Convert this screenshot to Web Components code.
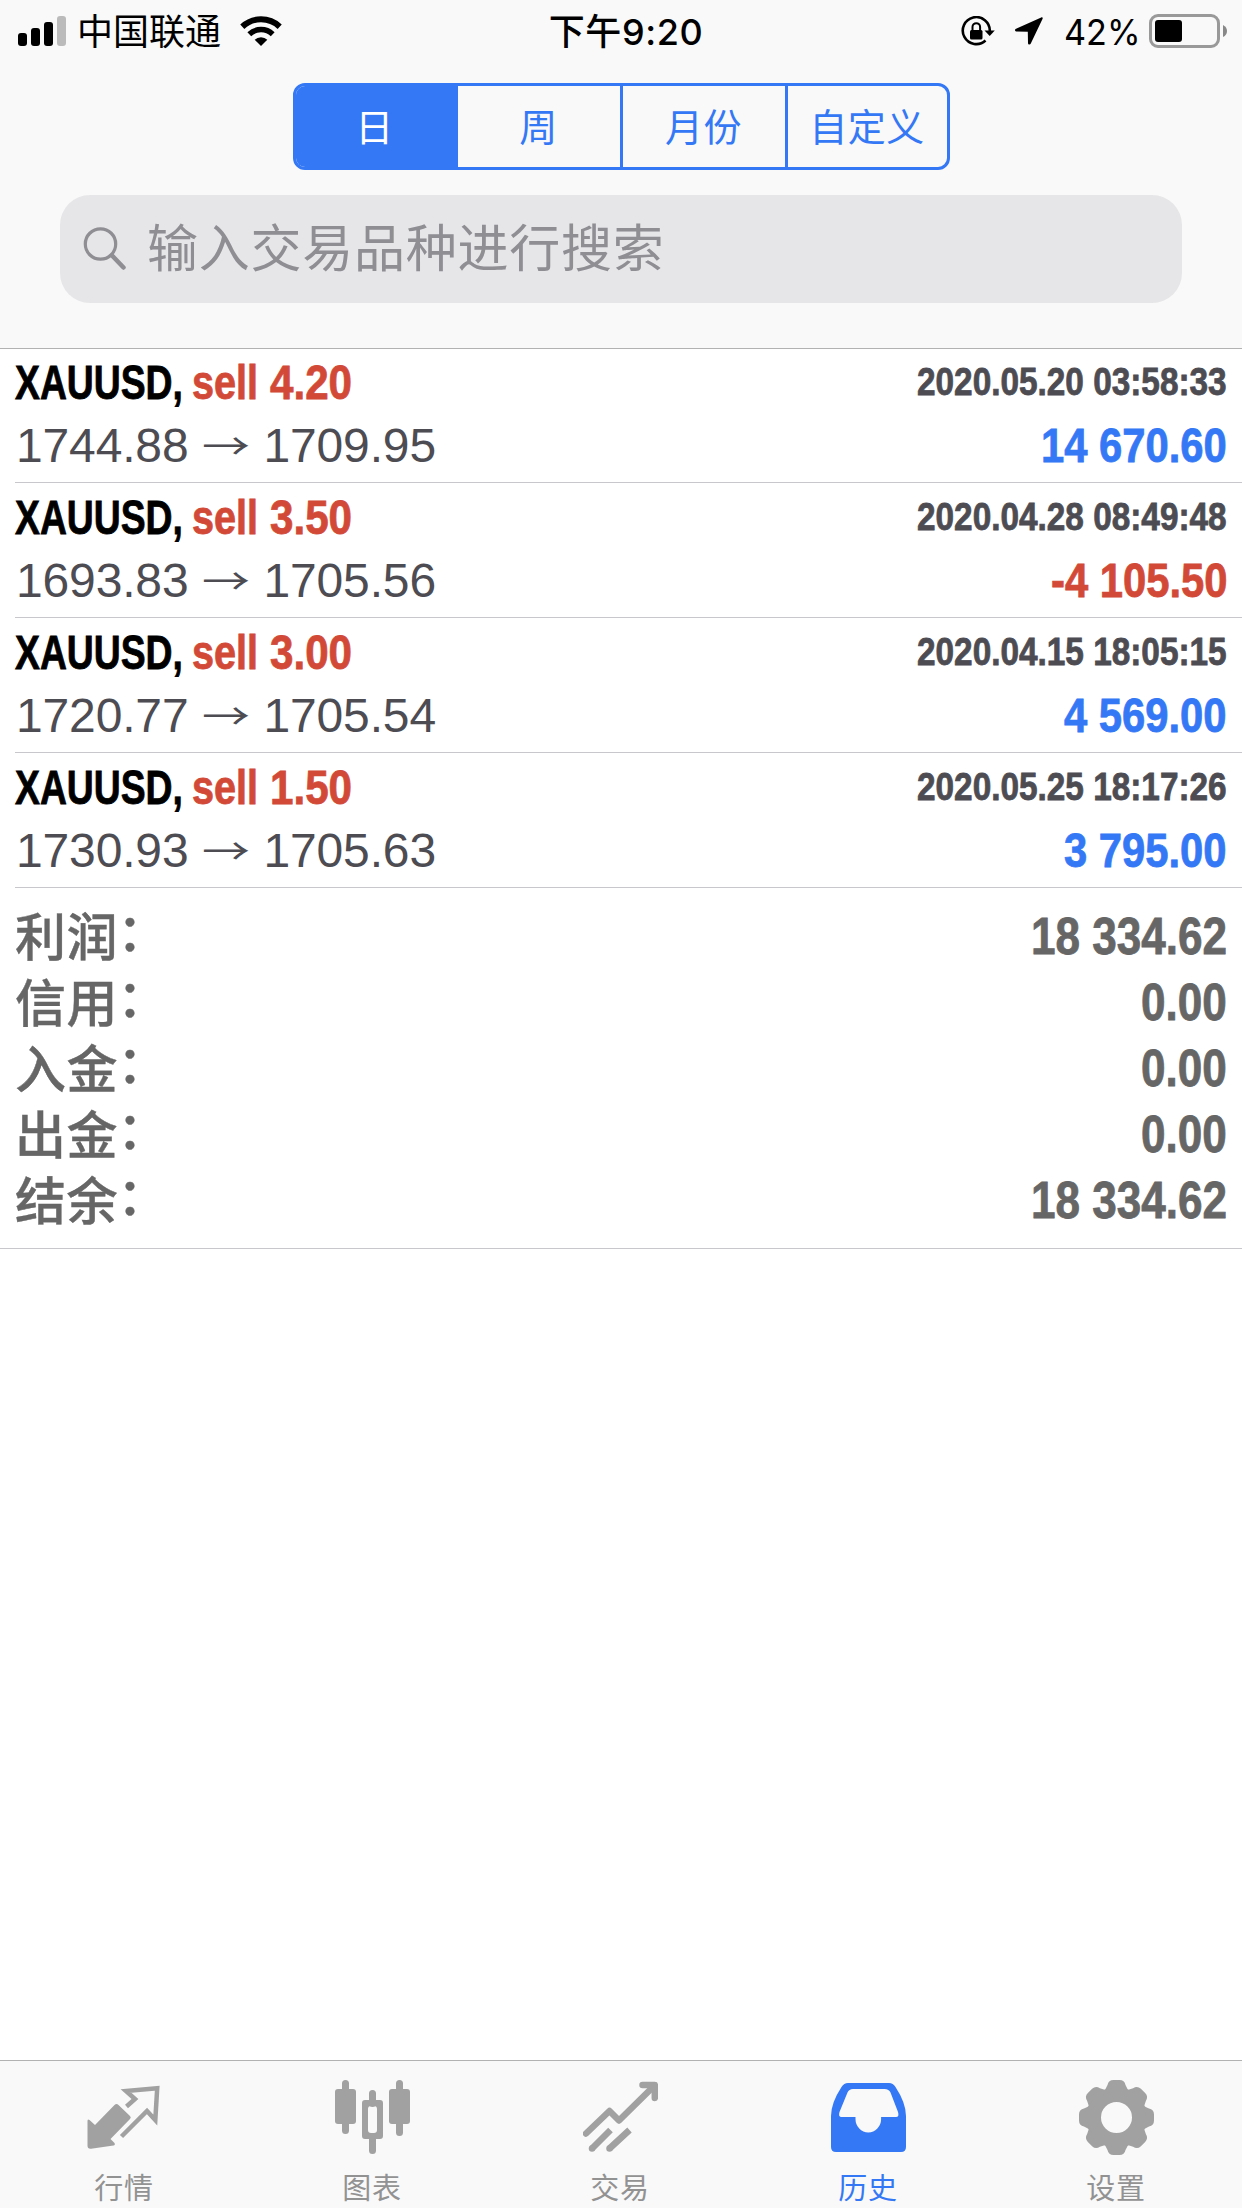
<!DOCTYPE html>
<html lang="zh-CN">
<head>
<meta charset="utf-8">
<title>历史</title>
<style>
  html, body { margin: 0; }
  body {
    width: 1242px;
    height: 2208px;
    overflow: hidden;
    background: #fff;
    font-family: "Liberation Sans", "Noto Sans CJK SC", sans-serif;
    --blue: #3478f6;
    --red: #d24a37;
    --dark: #4d4c53;
    --gray: #666;
    --bar: #f9f9f9;
  }
</style>
</head>
<body>
<history-app></history-app>

<script>
// condenses its text horizontally and keeps the layout box in step
class SqueezeText extends HTMLElement {
  constructor() {
    super();
    this.attachShadow({ mode: "open" });
    this.shadowRoot.innerHTML = `
      <style>
        :host { display: inline-block; white-space: nowrap; }
        span { display: inline-block; transform-origin: 0 50%; }
      </style>
      <span><slot></slot></span>
    `;
  }

  connectedCallback() {
    const span = this.shadowRoot.querySelector("span");
    const scale = Number(this.getAttribute("scale") || 1);
    const width = span.getBoundingClientRect().width;
    span.style.transform = `scaleX(${scale})`;
    this.style.width = `${width * scale}px`;
  }
}
customElements.define("squeeze-text", SqueezeText);

class StatusBar extends HTMLElement {
  constructor() {
    super();
    this.attachShadow({ mode: "open" });
    this.shadowRoot.innerHTML = `
      <style>
        :host {
          display: grid;
          grid-template-columns: 1fr auto 1fr;
          align-items: center;
          height: 60px;
          padding: 0 14px 0 18px;
          box-sizing: border-box;
          color: #000;
          font: 36px/60px Inter, "Noto Sans CJK SC", sans-serif;
        }
        svg { display: block; flex: none; }
        .left, .right { display: flex; align-items: center; }
        .right { justify-content: flex-end; }
        .carrier { margin: 2px 0 0 11px; height: 60px; line-height: 60px; }
        .wifi { margin-left: 19px; }
        .time { font-weight: 500; margin: 1px 0 0 6px; height: 60px; letter-spacing: .6px; }
        .lock { margin-right: 20px; }
        .loc { margin-right: 21px; }
        .pct { margin: 2px 8px 0 0; height: 60px; }
      </style>
      <div class="left">
        <svg width="48" height="30" viewBox="0 0 48 30">
          <rect x="0" y="17" width="9" height="13" rx="3"/>
          <rect x="13" y="12" width="9" height="18" rx="3"/>
          <rect x="26" y="6" width="9" height="24" rx="3"/>
          <rect x="39" y="0" width="9" height="30" rx="3" fill="#bbb"/>
        </svg>
        <span class="carrier">中国联通</span>
        <svg class="wifi" width="42" height="30" viewBox="0 0 42 30">
          <path d="M2.3 10.7a27.5 27.5 0 0 1 37.400 0" fill="none" stroke="#000" stroke-width="6"/>
          <path d="M9.300 18.200a17 17 0 0 1 23.400 0" fill="none" stroke="#000" stroke-width="5.500"/>
          <path d="M21 30l-6.300-6.200a9 9 0 0 1 12.600 0z"/>
        </svg>
      </div>
      <div class="time">下午9:20</div>
      <div class="right">
        <svg class="lock" width="34" height="30" viewBox="0 0 34 30">
          <path d="M24.500 24.500a13.500 13.500 0 1 1 4.300-9.500" fill="none" stroke="#000" stroke-width="2.600"/>
          <path d="M23.500 14.500h10.300l-5.100 5.500z"/>
          <rect x="9" y="14" width="12.500" height="9.500" rx="1.500"/>
          <path d="M11.500 15v-4a3.800 3.800 0 0 1 7.600 0v4" fill="none" stroke="#000" stroke-width="2"/>
        </svg>
        <svg class="loc" width="28" height="28" viewBox="0 0 28 28">
          <path d="M26.200.4L1 11.800c-1.600.8-1.200 2.700.6 2.700l11.200.2.200 11.200c0 1.900 2.100 2.200 2.800.6L27.600 1.800c.4-1-.4-1.800-1.400-1.400z"/>
        </svg>
        <squeeze-text class="pct" scale=".95">42%</squeeze-text>
        <svg width="79" height="34" viewBox="0 0 79 34">
          <rect x="1.500" y="1.500" width="68" height="31" rx="7.500" fill="none" stroke="#999" stroke-width="3"/>
          <rect x="6" y="6" width="27" height="22" rx="3"/>
          <path d="M74 11q4 2 4 6t-4 6z" fill="#888"/>
        </svg>
      </div>
    `;
  }
}
customElements.define("status-bar", StatusBar);

class PeriodTabs extends HTMLElement {
  constructor() {
    super();
    this.attachShadow({ mode: "open" });
    this.shadowRoot.innerHTML = `
      <style>
        :host {
          display: grid;
          grid-template-columns: 162px 162px 165px 1fr;
          width: 657px;
          height: 87px;
          margin: 23px auto 0;
          box-sizing: border-box;
          border: 3px solid var(--blue);
          border-radius: 12px;
          overflow: hidden;
          background: var(--bar);
          color: var(--blue);
          font: 38px/77px "Noto Sans CJK SC", sans-serif;
          letter-spacing: .5px;
          text-align: center;
        }
        div { box-sizing: border-box; }
        .on { background: var(--blue); color: #fff; padding-right: 4px; }
        .rule { border-left: 3px solid var(--blue); }
      </style>
      <div class="on">日</div><div>周</div><div class="rule">月份</div><div class="rule">自定义</div>
    `;
  }
}
customElements.define("period-tabs", PeriodTabs);

class SearchField extends HTMLElement {
  constructor() {
    super();
    this.attachShadow({ mode: "open" });
    this.shadowRoot.innerHTML = `
      <style>
        :host {
          display: flex;
          align-items: center;
          height: 108px;
          margin: 25px 60px 0;
          padding-left: 23px;
          border-radius: 30px;
          background: #e6e6e9;
          color: #8e8e93;
          font: 51px/100px "Noto Sans CJK SC", sans-serif;
          letter-spacing: 0.75px;
        }
        svg { margin-right: 19px; }
        div { height: 108px; }
      </style>
      <svg width="45" height="45" viewBox="0 0 45 45" fill="none" stroke="#8e8e93">
        <circle cx="17.500" cy="17" r="15.200" stroke-width="3.200"/>
        <path d="M29 28.500l11.500 12" stroke-width="4.500" stroke-linecap="round"/>
      </svg>
      <div><slot></slot></div>
    `;
  }
}
customElements.define("search-field", SearchField);

class DealRow extends HTMLElement {
  constructor() {
    super();
    this.attachShadow({ mode: "open" });
  }

  connectedCallback() {
    const { symbol, lot, open, close, time, profit } = this.dataset;
    const color = profit.startsWith("-") ? "var(--red)" : "var(--blue)";
    this.shadowRoot.innerHTML = `
      <style>
        :host {
          display: block;
          height: 135px;
          box-sizing: border-box;
          margin-left: 15px;
          padding: 3px 15px 0 0;
          border-bottom: 1px solid #c8c7cc;
          color: var(--dark);
          font-size: 48px;
        }
        .line { display: flex; justify-content: space-between; height: 63px; line-height: 63px; }
        .line > div { display: flex; }
        .title, .time, .profit { font-weight: bold; -webkit-text-stroke: .8px; }
        .symbol { color: #000; }
        .side { color: var(--red); margin: 0 12px 0 9px; }
        .lot { color: var(--red); }
        .time { font-size: 39px; line-height: 61px; }
        .profit { color: ${color}; }
        .prices { padding-left: 1px; letter-spacing: -.15px; }
        .arrow {
          width: 48px;
          margin: 0 13.500px;
          text-align: center;
          font-family: "Noto Sans CJK SC", sans-serif;
          transform: translateY(-1px) scaleY(.75);
        }
      </style>
      <div class="line">
        <div class="title">
          <squeeze-text class="symbol" scale=".777">${symbol},</squeeze-text>
          <squeeze-text class="side" scale=".825">sell</squeeze-text>
          <squeeze-text class="lot" scale=".878">${lot}</squeeze-text>
        </div>
        <squeeze-text class="time" scale=".855">${time}</squeeze-text>
      </div>
      <div class="line">
        <div class="prices"><span>${open}</span><span class="arrow">→</span><span>${close}</span></div>
        <squeeze-text class="profit" scale=".87">${profit}</squeeze-text>
      </div>
    `;
  }
}
customElements.define("deal-row", DealRow);

class SummaryRow extends HTMLElement {
  constructor() {
    super();
    this.attachShadow({ mode: "open" });
    this.shadowRoot.innerHTML = `
      <style>
        :host {
          display: flex;
          justify-content: space-between;
          height: 66px;
          line-height: 66px;
          padding: 0 15px;
          color: var(--gray);
          font-size: 51px;
        }
        .label {
          height: 66px;
          font-family: "Noto Sans CJK SC", sans-serif;
          font-weight: 500;
          line-height: 62px;
          letter-spacing: .6px;
          -webkit-text-stroke: .4px;
        }
        .colon { display: inline-block; transform: translate(-1px, -5px); }
        .value { font-weight: bold; line-height: 68px; -webkit-text-stroke: .8px; }
      </style>
      <span class="label"><slot></slot><span class="colon">：</span></span>
      <squeeze-text class="value" scale=".864">${this.getAttribute("value")}</squeeze-text>
    `;
  }
}
customElements.define("summary-row", SummaryRow);

const ICONS = {
  quotes: `
    <path d="M.5 41q0-2.500 2-1l5.500 5L27.500 25q2-2 4 0l11.500 11q1.500 1.500 0 3L23.500 59l4 4q1 2-1 2.500L4 68.700q-3.500.300-3.500-3z"/>
    <path d="M39.500 26.500l8.500-7.500-9-8 31.200-2.700-1.900 31.700L60 31 34.500 56.500" fill="none" stroke="currentColor" stroke-width="4.500"/>`,
  charts: `
    <rect x="0" y="9" width="21" height="35" rx="3"/>
    <path d="M10.500 3.500v47M64.500 3.500v49M37.500 13.500v10M37.500 57v13.500" stroke="currentColor" stroke-width="7" stroke-linecap="round"/>
    <rect x="54" y="9" width="21" height="35" rx="3"/>
    <path fill-rule="evenodd" d="M30 20h15q3 0 3 3v33q0 3-3 3h-15q-3 0-3-3v-33q0-3 3-3zM36 26q-3 0-3 3v21q0 3 3 3h3q3 0 3-3v-21q0-3-3-3z"/>`,
  trade: `
    <g fill="none" stroke="currentColor" stroke-width="6.500">
      <path d="M3 53.500l23.500-22.500 9.500 9.500L71 6" stroke-linecap="round" stroke-linejoin="round"/>
      <path d="M59.500 5h12.300v13" stroke-linecap="round" stroke-linejoin="round"/>
      <path d="M27.500 50L9 68.500M46.500 50L26.500 68.500"/>
    </g>
    <circle cx="9" cy="68.500" r="3.250"/><circle cx="26.500" cy="68.500" r="3.250"/>`,
  history: `
    <path fill-rule="evenodd" d="M17 3h41q4 0 6.500 4 10.500 16 10.500 29v31q0 5-5 5H5q-5 0-5-5V36Q0 23 10.500 7 13 3 17 3zM22 9q-4 0-5.500 3.500L8.500 32q-1.500 5 2 5H24.500v2a12.800 13.500 0 0 0 25.600 0v-2H65q3.500 0 2-5L59.500 12.500Q58 9 53.500 9z"/>`,
  settings: (() => {
    const teeth = [0, 45, 90, 135, 180, 225, 270, 315].map((a) =>
      `<path transform="rotate(${a} 37.500 37.500)" d="M24 12q3-3 4.500-7 1-5 6-5h6q5 0 6 5 1.500 4 4.500 7z"/>`
    );
    return `${teeth.join("")}<circle cx="37.500" cy="37.500" r="22.500" fill="none" stroke="currentColor" stroke-width="14"/>`;
  })(),
};

class TabItem extends HTMLElement {
  constructor() {
    super();
    this.attachShadow({ mode: "open" });
    this.shadowRoot.innerHTML = `
      <style>
        :host {
          display: flex;
          flex-direction: column;
          align-items: center;
          width: 248px;
          padding-top: 19px;
          color: #929292;
          font: 29px/44px "Noto Sans CJK SC", sans-serif;
          letter-spacing: .8px;
        }
        :host([active]) { color: var(--blue); }
        svg { display: block; color: #a1a1a1; fill: currentColor; }
        :host([active]) svg { color: var(--blue); }
        span { margin-top: 9px; }
      </style>
      <svg width="75" height="75" viewBox="0 0 75 75">${ICONS[this.getAttribute("icon")]}</svg>
      <span><slot></slot></span>
    `;
  }
}
customElements.define("tab-item", TabItem);

class HistoryApp extends HTMLElement {
  constructor() {
    super();
    this.attachShadow({ mode: "open" });
    this.deals = [
      { lot: "4.20", open: "1744.88", close: "1709.95", time: "2020.05.20 03:58:33", profit: "14 670.60" },
      { lot: "3.50", open: "1693.83", close: "1705.56", time: "2020.04.28 08:49:48", profit: "-4 105.50" },
      { lot: "3.00", open: "1720.77", close: "1705.54", time: "2020.04.15 18:05:15", profit: "4 569.00" },
      { lot: "1.50", open: "1730.93", close: "1705.63", time: "2020.05.25 18:17:26", profit: "3 795.00" },
    ];
  }

  connectedCallback() {
    const rows = this.deals.map((d) => `
      <deal-row data-symbol="XAUUSD" data-lot="${d.lot}" data-open="${d.open}"
        data-close="${d.close}" data-time="${d.time}" data-profit="${d.profit}"></deal-row>`);
    this.shadowRoot.innerHTML = `
      <style>
        :host { display: flex; flex-direction: column; height: 2208px; }
        header { height: 348px; background: var(--bar); border-bottom: 1px solid #b2b2b2; }
        main { flex: 1; margin-top: -1px; }
        .summary { padding: 15px 0 15px; border-bottom: 1px solid #c8c7cc; }
        nav { display: flex; height: 147px; background: var(--bar); border-top: 1px solid #b2b2b2; }
      </style>
      <header>
        <status-bar></status-bar>
        <period-tabs></period-tabs>
        <search-field>输入交易品种进行搜索</search-field>
      </header>
      <main>
        ${rows.join("")}
        <div class="summary">
          <summary-row value="18 334.62">利润</summary-row>
          <summary-row value="0.00">信用</summary-row>
          <summary-row value="0.00">入金</summary-row>
          <summary-row value="0.00">出金</summary-row>
          <summary-row value="18 334.62">结余</summary-row>
        </div>
      </main>
      <nav>
        <tab-item icon="quotes">行情</tab-item>
        <tab-item icon="charts">图表</tab-item>
        <tab-item icon="trade">交易</tab-item>
        <tab-item icon="history" active>历史</tab-item>
        <tab-item icon="settings">设置</tab-item>
      </nav>
    `;
  }
}
customElements.define("history-app", HistoryApp);
</script>
</body>
</html>
